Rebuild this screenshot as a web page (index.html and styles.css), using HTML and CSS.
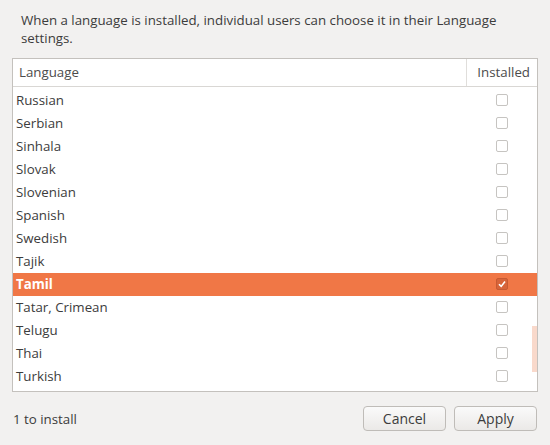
FILE: index.html
```html
<!DOCTYPE html>
<html>
<head>
<meta charset="utf-8">
<link rel="stylesheet" href="styles.css">
</head>
<body>
<div class="dialog">
  <p class="intro">When a language is installed, individual users can choose it in their Language settings.</p>
  <div class="table">
    <div class="head">
      <div class="hcol lang">Language</div>
      <div class="hcol inst">Installed</div>
    </div>
    <div class="body">
      <div class="rows">
        <div class="row"><span class="name">Russian</span><span class="cb"></span></div>
        <div class="row"><span class="name">Serbian</span><span class="cb"></span></div>
        <div class="row"><span class="name">Sinhala</span><span class="cb"></span></div>
        <div class="row"><span class="name">Slovak</span><span class="cb"></span></div>
        <div class="row"><span class="name">Slovenian</span><span class="cb"></span></div>
        <div class="row"><span class="name">Spanish</span><span class="cb"></span></div>
        <div class="row"><span class="name">Swedish</span><span class="cb"></span></div>
        <div class="row"><span class="name">Tajik</span><span class="cb"></span></div>
        <div class="row selected"><span class="name">Tamil</span><span class="cb checked"><svg width="10" height="10" viewBox="0 0 10 10"><path d="M2 5.2 L4.2 7.4 L8 2.6" fill="none" stroke="#fff" stroke-width="1.6"/></svg></span></div>
        <div class="row"><span class="name">Tatar, Crimean</span><span class="cb"></span></div>
        <div class="row"><span class="name">Telugu</span><span class="cb"></span></div>
        <div class="row"><span class="name">Thai</span><span class="cb"></span></div>
        <div class="row"><span class="name">Turkish</span><span class="cb"></span></div>
      </div>
      <div class="scrollbar"></div>
    </div>
  </div>
  <div class="footer">
    <span class="status">1 to install</span>
    <div class="buttons">
      <button class="btn cancel">Cancel</button>
      <button class="btn apply">Apply</button>
    </div>
  </div>
</div>
</body>
</html>
```
FILE: styles.css
```css
html, body {
  margin: 0;
  padding: 0;
  background: #f2f1f0;
}
body {
  width: 550px;
  height: 445px;
  overflow: hidden;
  font-family: "Open Sans", "DejaVu Sans", sans-serif;
  font-size: 13.3px;
  color: #3c3c3c;
}
.dialog {
  padding: 11px 12px 0 12px;
}
.intro {
  margin: 0 0 0 9px;
  line-height: 18px;
  width: 510px;
  color: #3c3c3c;
}
.table {
  margin-top: 11px;
  width: 526px;
  height: 334px;
  border: 1px solid #c4c1bd;
  background: #fff;
  box-sizing: border-box;
  display: flex;
  flex-direction: column;
  overflow: hidden;
}
.head {
  display: flex;
  height: 28px;
  border-bottom: 1px solid #d9d7d4;
  flex: none;
  box-sizing: border-box;
}
.hcol {
  line-height: 27px;
  color: #4c4c4c;
}
.hcol.lang {
  flex: 1;
  padding-left: 6px;
}
.hcol.inst {
  width: 71px;
  border-left: 1px solid #e0dedb;
  text-align: right;
  padding-right: 7px;
  box-sizing: border-box;
}
.body {
  flex: 1;
  position: relative;
  overflow: hidden;
}
.rows {
  padding-top: 1.5px;
}
.row {
  display: flex;
  align-items: center;
  height: 23px;
  padding-left: 3px;
}
.row .name {
  flex: 1;
}
.row.selected {
  background: #f07746;
  color: #fff;
  font-weight: bold;
}
.cb {
  width: 10px;
  height: 10px;
  border: 1px solid #c6c4c1;
  border-radius: 2px;
  margin-right: 29px;
  background: #fff;
  display: flex;
  align-items: center;
  justify-content: center;
}
.cb.checked {
  background: #d7643a;
  border-color: #c75a32;
}
.scrollbar {
  position: absolute;
  right: 0;
  top: 239px;
  width: 5px;
  height: 46px;
  background: #f9d9cb;
}
.footer {
  display: flex;
  align-items: center;
  justify-content: space-between;
  margin-top: 14px;
}
.status {
  padding-left: 1px;
  color: #3c3c3c;
}
.buttons {
  display: flex;
  gap: 8px;
  padding-right: 1px;
}
.btn {
  width: 83px;
  height: 25px;
  font-family: inherit;
  font-size: 14px;
  color: #3c3c3c;
  border: 1px solid #bfbcb8;
  border-radius: 4px;
  background: linear-gradient(#fafafa, #ebe9e7);
  padding: 0;
}
```
